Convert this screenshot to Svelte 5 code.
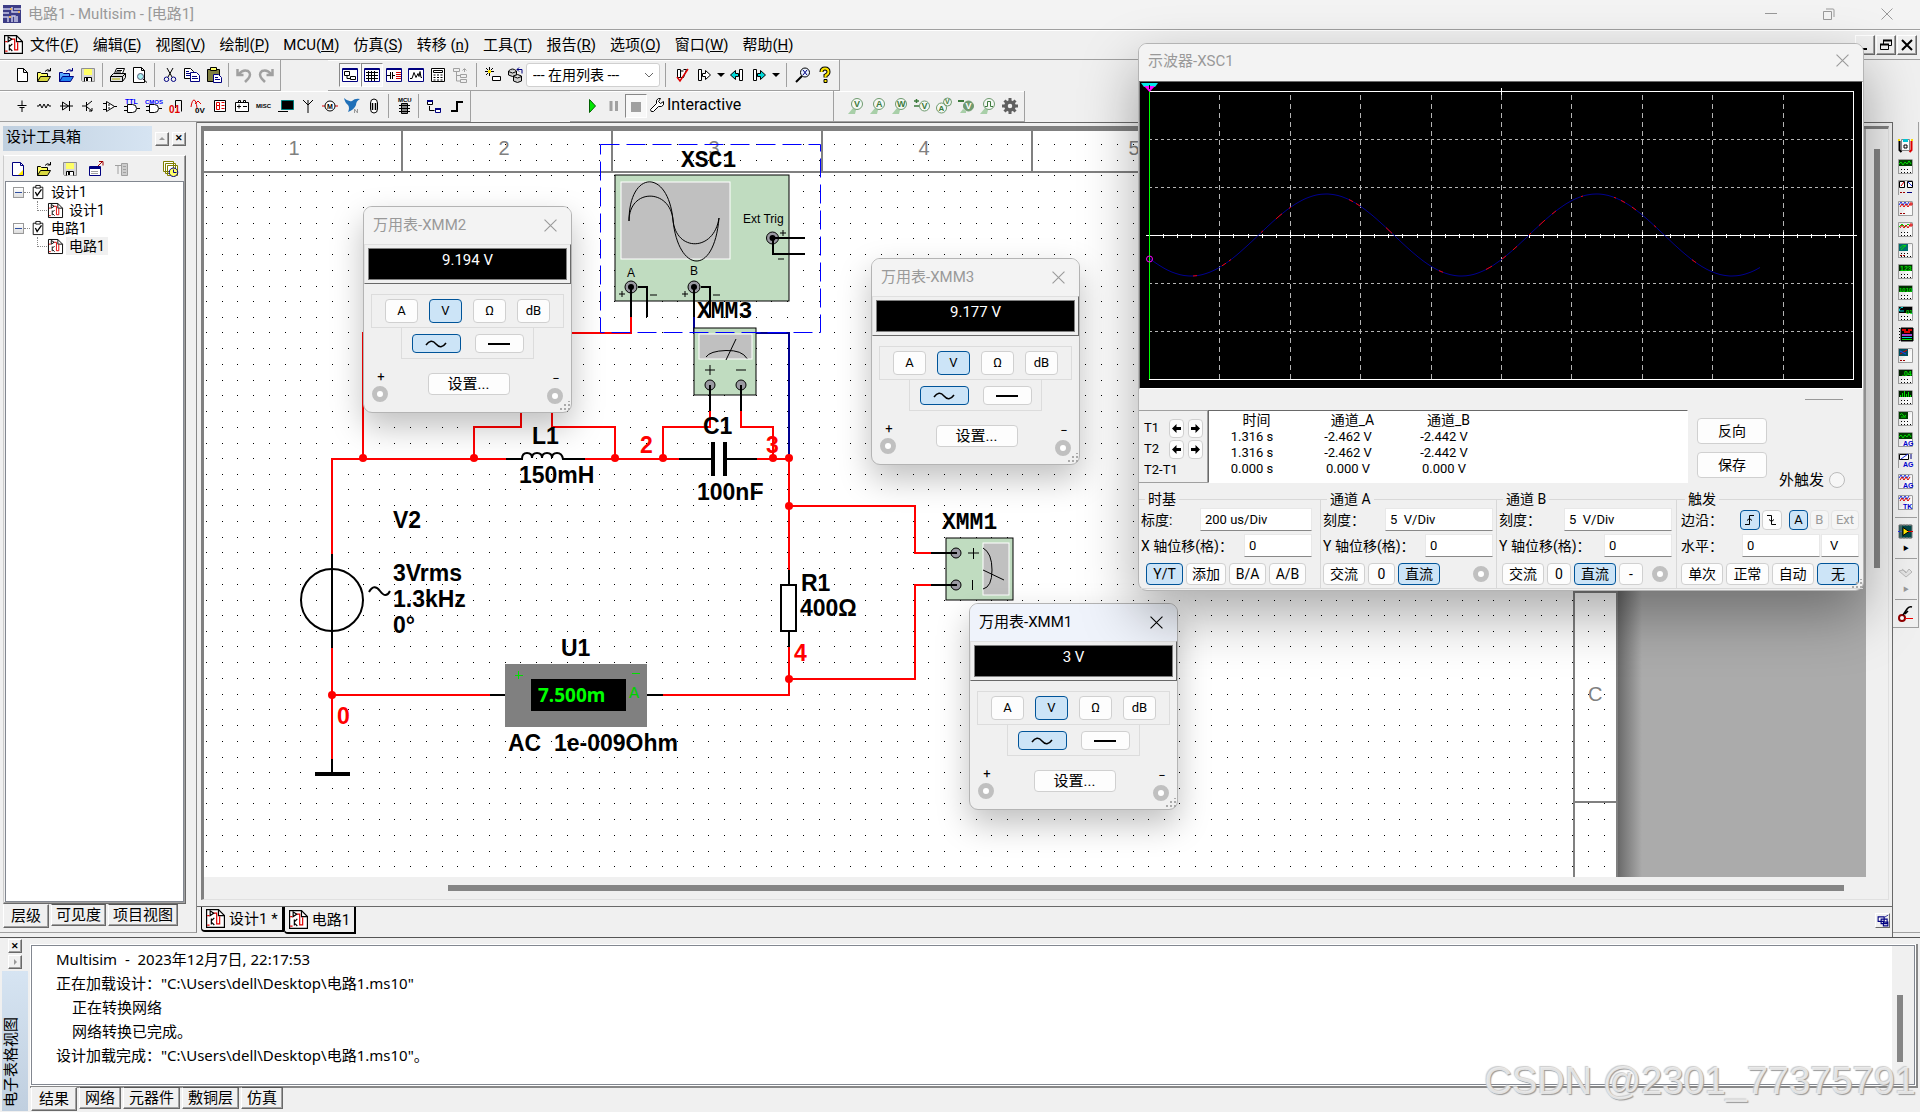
<script>
  // Multisim main window: toolbars, schematic sheet, instrument windows and log.

  const menus = [
    ['文件', 'F'], ['编辑', 'E'], ['视图', 'V'], ['绘制', 'P'], ['MCU', 'M'], ['仿真', 'S'], ['转移 ', 'n'],
    ['工具', 'T'], ['报告', 'R'], ['选项', 'O'], ['窗口', 'W'], ['帮助', 'H'],
  ]

  // ─── Icons ─────────────────────────────────────────────────────────
  // Each shape is [path, stroke, fill] or { t, x, y, s, c } for lettering.
  const K = '#000'
  const N = 'none'
  const NAVY = '#000080'
  const GREY = '#a0a0a0'
  const YEL = '#ffff66'
  const frame = ['M.5 1.5h15v13h-15z', NAVY, '#fff']
  const frameTop = ['M0 2.5h16', NAVY, N]
  const gate = ['M3.5 6.5h5q4 0 4 4t-4 4h-5zM0 8.5h3M0 12.5h3M13 10.5h3', K, '#fff']
  const probe = ['M9 .5a5.500 5.500 0 1 1 0 11a5.500 5.500 0 1 1 0-11z', '#6f9a6f', '#f4f8f4']
  const probeTail = ['M5 10l-5 6h7l1-4z', N, '#a8cfa8']

  const icons = {
    new: [['M3.5 1.5h6l4 4v9h-10zM9.5 1.5v4h4', K, '#fff']],
    newYellow: [['M2.5 1.5h8l3 3v10h-11zM10.5 1.5v3h3', NAVY, '#fff'], ['M13 9v5H8z', N, '#ffe800']],
    open: [['M1.5 14.5v-9h3l1 1h6v3', K, YEL], ['M1.5 14.5l3-5h10l-3 5z', K, '#d8d840'], ['M9 4.5q2-3 5-1M14.5 1v3h-3', K, N]],
    openDesign: [['M1.5 14.5v-9h3l1 1h6v3', NAVY, '#58a8ff'], ['M1.5 14.5l3-5h11l-3 5z', NAVY, '#2080f0'], ['M8 4.5q3-3 6-1M14.5 1v3h-3', NAVY, N]],
    save: [['M1.5 1.5h13v13h-12l-1-1z', '#909090', '#d8d8d8'], ['M4 2h8v6H4z', N, YEL], ['M4.5 14.5v-4h7v4', K, '#fff'], ['M6 11h2v3H6z', N, K]],
    print: [['M4.5 6.5l2-5h8l-2 5', K, '#fff'], ['M.5 9.5l3-3h12v4l-3 4H.5zM.5 9.5h12v5M12.5 9.5l3-3', K, '#ddd'], ['M2 12h8', '#b8b800', N], ['M7 3.5h5M6 5h5', K, N]],
    preview: [['M1.5.5h8l3 3v12h-11zM9.5.5v3h3', K, '#fff'], ['M8.5 6.5a3 3 0 1 1 0 6a3 3 0 1 1 0-6z', '#557', '#a8f0f0'], ['M11 12l4 3.500', K, N]],
    cut: [['M5 1l5 9M11 1L6 10', K, N], ['M4.500 10a2 2 0 1 1 0 4.500a2 2 0 1 1 0-4.500zM11.500 10a2 2 0 1 1 0 4.500a2 2 0 1 1 0-4.500z', NAVY, N]],
    copy: [['M.5 1.500h6l3 3v7h-9z', K, '#fff'], ['M6.500 5.500h6l3 3v6h-9z', NAVY, '#fff'], ['M2 4.500h3M2 6.500h4M2 8.500h4M8 9.500h5M8 11.500h6', NAVY, N]],
    paste: [['M1.500 2.500h12v12h-12z', K, '#808040'], ['M4.500.5h6v3h-6z', K, YEL], ['M7.500 7.500h5l3 3v5h-8z', NAVY, '#fff'], ['M9 10.500h3M9 12.500h5', NAVY, N]],
    undo: [['M1.500 2v6h6M3 7q4-5 9-3q4 3 0 8l-3 3', GREY, N, 2.500]],
    redo: [['M14.500 2v6h-6M13 7q-4-5-9-3q-4 3 0 8l3 3', GREY, N, 2.500]],
    hierarchy: [frame, frameTop, ['M2.500 4.500h5v4h-5zM8.500 9.500h5v3h-5zM5 9v2.500h3', K, '#fff']],
    grid: [frame, frameTop, ['M2 5.500h12M2 8.500h12M2 11.500h12M4.500 4v10M7.500 4v10M10.500 4v10', K, N]],
    database: [frame, frameTop, ['M1 8.500h3M4.500 5v7M6.500 5v7M7 8.500h2', K, N], ['M10 5.500h5M10 7.500h5M10 9.500h5M10 11.500h5', '#d00000', N]],
    grapher: [frame, frameTop, ['M2 11.500h2l2-6 2 5 2-4 1 3 1-5 1 6h1', K, N]],
    postproc: [['M1.500 1.500h13v13h-13z', K, '#fff'], ['M3.500 3.500h9v2h-9z', K, '#fff'], ['M3.500 8h2M7 8h2M10.500 8h2M3.500 10.500h2M7 10.500h2M10.500 10.500h2M3.500 13h2M7 13h2M10.500 13h2', K, N]],
    tree: [['M1.500 1.500h6v3h-6zM8.500 7.500h6v3h-6zM8.500 12.500h6v3h-6zM4.500 5v9h4M5 8.500h3M12.500 5V2M10.500 3.500l2-2 2 2', GREY, N]],
    wizard: [['M7.500 9.500h8v4h-8z', K, '#fff'], ['M4.500 0v3M4.500 6v3M0 4.500h3M6 4.500h3M1 1l2 2M8 1L6 3M1 8l2-2', K, N], ['M3 3h3v3H3z', N, '#ffe800']],
    dbmanager: [['M1.500 4q4-4 8 0v4q-4 3-8 0zM1.500 4.500q4 3 8 0', K, '#ccc'], ['M6.500 9q4-3 8 0v5q-4 3-8 0zM6.500 9.500q4 3 8 0', K, '#ccc'], ['M10 2.500h5v4M12 .5l-2 2 2 2', NAVY, N]],
    erc: [['M3.500 2.500h3v8h-3zM9.500 2.500h3l-3 8h-3M6.500 4h3', K, '#fff'], ['M3 10l3 4L14 2', '#e00000', N, 1.5]],
    fwd: [['M2.500 2.500h3v11h-3zM6.500 6.500h3v-3l5 4.500-5 4.500v-3h-3z', K, '#fff']],
    back: [['M13.500 2.500h-3v11h3z', K, '#fff'], ['M9.500 6.500h-3v-3L1.500 8l5 4.500v-3h3z', K, '#00d8d8']],
    fwdCyan: [['M2.500 2.500h3v11h-3z', K, '#fff'], ['M6.500 6.500h3v-3l5 4.500-5 4.500v-3h-3z', K, '#00d8d8']],
    find: [['M10 1a4.500 4.500 0 1 1 0 9a4.500 4.500 0 1 1 0-9z', K, '#e8f0ff'], ['M8 3l4 5M12 3L8 8', NAVY, N], ['M7 9l-6 6', K, N, 2]],
    help: [['M4.500 5q0-3.500 3.500-3.500T11.500 5q0 2-3 3.500v2', K, N, 4], ['M4.500 5q0-3.500 3.500-3.500T11.500 5q0 2-3 3.500v2', '#ffe800', N, 2], ['M7 12.500h3v3H7z', K, '#ffe800']],
    source: [['M8 2.500v5M3.500 7.500h9M5.500 9.500h5M8 10v4', K, N]],
    resistor: [['M1 8h2l1-2 2 4 2-4 2 4 2-4 1 2h2', K, N]],
    diode: [['M2 8h13M4.500 4v8l6-4zM11.500 3v10', K, N]],
    transistor: [['M2 8h4M6.500 4v9M7 7l5-4M7 9l5 4M9 13h3v-3', K, N]],
    opamp: [['M4.500 3.500v10l8-5zM1 5.500h3M1 11.500h3M12 8.500h3', K, '#fff'], ['M6 7h2M6 10h2', K, N]],
    ttl: [gate, { t: 'TTL', x: 1, y: 6, s: 7, c: '#0000ff' }],
    cmos: [gate, { t: 'CMOS', x: -1, y: 6, s: 6, c: '#0000ff' }],
    digital: [['M7.500 10V2.500h6v11', K, N], { t: '01', x: 1, y: 15, s: 10, c: '#e00000' }],
    mixed: [['M1 9q1-7 3-7t3 8', '#e00000', N], ['M5 6l3-3 3 3', '#e00000', N], { t: '0V', x: 5, y: 15, s: 8, c: K }],
    indicator: [['M2.500 2.500h11v11h-11z', K, '#fff'], ['M4.500 4.500h3v3h-3zM4.500 7.500h3v4h-3zM9.500 4.500h3M9.500 7.500h3M9.500 10.500h3', '#e00000', N]],
    power: [['M1.500 4.500h13v9h-13zM4.500 4.500v-2h2v2M9.500 4.500v-2h2v2M3 8.500h4M5 6.500v4M9 8.500h4', K, '#fff']],
    misc: [{ t: 'MISC', x: 0, y: 10, s: 6, c: K }],
    periph: [['M3.500 2.500h12v9h-12z', '#008080', K], ['M0 13.500h10', K, N]],
    rf: [['M8 15V7L3 2M8 7l5-5M8 2v5', K, N]],
    motor: [['M0 8h3M13 8h3', '#e00000', N], ['M8 3a5 5 0 1 1 0 10a5 5 0 1 1 0-10z', K, '#fff'], { t: 'M', x: 5, y: 11, s: 7, c: K }],
    ni: [['M0 0q4 4 8 3q3-3 8-2q-4 2-4 6q-2 5-8 7q2-4 0-7q-3-2-4-7z', N, '#2070b8'], ['M10.500 15v-4l3 4v-4', '#999', N]],
    connector: [['M8 1q3.500 0 3.500 4v6q0 4-3.500 4t-3.500-4V5q0-4 3.500-4z', K, '#fff'], ['M6.500 5v7M9.500 5v7', K, N, 1.500]],
    mcu: [['M5.500 5.500h6v10h-6z', K, '#888'], ['M3 7.500h11M3 10.500h11M3 13.500h11', K, N], { t: 'MCU', x: 2, y: 4, s: 6, c: K }],
    block: [['M1.500 2.500h5v4h-5z', K, '#fff'], ['M9.500 10.500h5v4h-5z', NAVY, '#fff'], ['M1 3h6M9 11h6', NAVY, N, 2], ['M3.500 8v4.500h5', K, N]],
    bus: [['M3 13h6V4h6', K, N, 2]],
    probeV: [probeTail, probe, { t: 'V', x: 6, y: 9, s: 9, c: '#3c7a3c' }],
    probeA: [probeTail, probe, { t: 'A', x: 6, y: 9, s: 9, c: '#3c7a3c' }],
    probeW: [probeTail, probe, { t: 'W', x: 5, y: 9, s: 9, c: '#3c7a3c' }],
    probeDiff: [['M0 3h5M2.500 1v4M0 8h5', '#3c7a3c', N, 1.5], ['M10.500 3a5 5 0 1 1 0 10a5 5 0 1 1 0-10z', '#6f9a6f', '#f4f8f4'], { t: 'V', x: 7.500, y: 11, s: 9, c: '#3c7a3c' }],
    probeAV: [['M11.500 0a4 4 0 1 1 0 8a4 4 0 1 1 0-8zM5.500 5a5 5 0 1 1 0 10a5 5 0 1 1 0-10z', '#6f9a6f', '#f4f8f4'], { t: 'V', x: 9, y: 6, s: 7, c: '#3c7a3c' }, { t: 'A', x: 2.500, y: 13, s: 8, c: '#3c7a3c' }],
    probeRef: [['M0 3h6', '#3c7a3c', N, 2], ['M10.500 3a5 5 0 1 1 0 10a5 5 0 1 1 0-10z', '#6f9a6f', '#6f9a6f'], ['M2 15l3-4 3 2v2z', N, '#a8cfa8'], { t: 'V', x: 7.500, y: 11, s: 9, c: '#fff' }],
    probeDig: [probeTail, probe, ['M5 8.500h2.500v-5h3v5H13', '#3c7a3c', N]],
    gear: [['M8 4a4 4 0 1 1 0 8a4 4 0 1 1 0-8z', '#606060', N, 3.500], ['M8 0v3M8 13v3M0 8h3M13 8h3M2.500 2.500l2 2M11.500 11.500l2 2M13.500 2.500l-2 2M4.500 11.500l-2 2', '#606060', N, 3]],
    rename: [['M1.500 5.500h11v9h-11z', NAVY, '#fff'], ['M1 7h12', NAVY, N, 2], ['M3 10.500h7M3 12.500h7', GREY, N], ['M10 5l5-5M11 .5h4v4', '#a00000', N]],
    text: [['M1 4.500h6M4 5v8', GREY, N], ['M7.500 2.500h6v12h-6zM9 8.500h3M9 11.500h3M9 5.500h3', GREY, '#ccc']],
    history: [['M.5.500h10v10H.5zM2.500 2.500h10v10h-10zM4.500 4.500h10v10h-10z', '#808000', '#fff'], ['M10.500 7a4 4 0 1 1 0 8.500a4 4 0 1 1 0-8.500z', NAVY, YEL], ['M10.500 8.500v3h3', NAVY, N]],
    clip: [['M2.500 2.500h11v13h-11z', K, '#fff'], ['M5.500.500h5v3h-5z', K, '#fff'], ['M5 8l2 4 5-7', K, N, 1.5]],
    sheet: [['M.5.500h10l5 5v10H.5z', K, '#fff'], ['M10.500.500v5h5', K, N], ['M1 13.500h2M1 5.500h2M6 3.500h3v9h2.500V6', '#e00000', N], ['M3.500 1.500v4l3-2zM4.500 8v5M5 9.500l2-2M5 11.500l2 2', K, N]],
    windows: [['M1.500 2.500h8v6h-8zM5.500 5.500h8v6h-8zM8.500 9.500h6v5h-6z', NAVY, '#fff', 1.500], ['M10 3l5-3', NAVY, N]],
    play: [['M5.500 1.500v13l6-6.500z', '#006000', '#00e800']],
    pause: [['M5 3v10M10.500 3v10', GREY, N, 3]],
    stop: [['M3 4h10v10H3z', N, GREY]],
  }

  const toolRows = [
    [
      ['new', 'open', 'openDesign', 'save', '|', 'print', 'preview', '|', 'cut', 'copy', 'paste', '|', 'undo', 'redo'],
      ['*hierarchy', '*grid', 'database', 'grapher', 'postproc', 'tree', '|', 'wizard', 'dbmanager', 'select', '|',
        'erc', 'fwd', 'v', 'back', 'fwdCyan', 'v', '|', 'find', 'help'],
    ],
    [
      ['source', 'resistor', 'diode', 'transistor', 'opamp', 'ttl', 'cmos', 'digital', 'mixed', 'indicator', 'power', 'misc',
        'periph', 'rf', 'motor', 'ni', 'connector', '|', 'mcu', '|', 'block', 'bus'],
      ['play', 'pause', '*stop', 'sim'],
      ['probeV', 'probeA', 'probeW', 'probeDiff', 'probeAV', 'probeRef', 'probeDig', 'gear'],
    ],
  ]

  // ─── Instruments on the right-hand bar ─────────────────────────────
  const screen = (fill) => ['M1 1h13v6H1z', N, fill]
  const box = ['M.5 15V.500h14', '#a0a0a0', N]
  const box2 = ['M14.500 1v13.500H1', '#a0a0a0', '#fbfbfb']
  const dots = ['M3 10.500h1M6 10.500h1M9 10.500h1M3 13.500h1M6 13.500h1M9 13.500h1M12 13.500h1', K, N]
  const redDots = ['M2 12.500h2M5 12.500h2', '#a00000', N]
  const waves = ['M2 6l2-3 2 3 2-3 2 3 2-3', '#e00000', N]
  const bluWaves = ['M1 4l2-3 2 3 2-3 2 3 2-3', '#2030e0', N]
  const green = '#00e000'
  const instruments = [
    [['M3.500 1.500h8v11h-8z', '#888', '#fff'], ['M5 1h5v3H5z', N, '#00c8d8'], ['M6 7h3v3H6z', K, N], ['M1.500 3v9l2 2', K, N, 2], ['M13.500 3v9l-2 2', '#e00000', N, 2], ['M1 1v2M14 1v2', '#ffe000', N, 2]],
    [box2, box, screen('#004000'), ['M1 5l2-2 2 3 2-3 2 2 2-3 2 3', green, N], dots],
    [box, ['M1.500 1.500h5v6h-5zM9.500 1.500h5v6h-5z', K, '#fff'], ['M3 6l3-4', '#e00000', N], ['M10 2l4 4', '#2030e0', N], redDots, ['M9 12.500h5', NAVY, N]],
    [box2, box, bluWaves, waves, redDots, ['M13 1v4M11 3h4', '#e00000', N]],
    [box2, box, ['M1 5l3-3 3 3 3-3 2 2', green, N], waves, dots, ['M13 1v4M11 3h4', '#e00000', N]],
    [box2, box, ['M1 1h9v7H1z', N, '#007070'], ['M2 5q3-4 6-2M3 7l5-5', green, N], redDots, dots],
    [box2, box, screen('#003000'), { t: '123', x: 2, y: 7, s: 7, c: green }, dots],
    [box2, box, screen('#003000'), { t: '1010', x: 1, y: 7, s: 6, c: green }, dots],
    [box2, box, screen(K), ['M5 1.500H3L1.500 3v2H6', '#00d8d8', N], { t: '01', x: 8, y: 8, s: 6, c: green }, dots],
    [['M3 1h12v13H3z', K, K], ['M4 3h3v2h4V3h3', '#e00000', N, 2], ['M4 8h10', '#a040d0', N, 2], ['M4 10.500h10', '#00d8d8', N], ['M4 12.500h10', green, N], ['M1.500 1v1M1.500 4v1M1.500 7v1M1.500 10v1M1.500 13v1', K, N]],
    [box2, box, ['M1 1h9v7H1z', N, '#005060'], ['M2 6l7-4', '#e00000', N], ['M2 3l6 3', '#2040ff', N], redDots],
    [box2, box, screen('#002000'), { t: '.04', x: 4, y: 7, s: 7, c: green }, dots],
    [box2, box, screen('#002000'), ['M2.500 7V5M4.500 7V3M6.500 7V1M8.500 7V4M10.500 7V2M12.500 7V5', green, N], dots],
    [box2, box, ['M1 1h9v7H1z', N, '#004000'], ['M2 4q2-3 3 0t3 0M3 6h5', green, N], dots],
    [box2, box, screen('#004000'), ['M1 5l2-2 2 3 2-3 2 2 2-3 2 3', green, N], { t: 'AG', x: 5, y: 14, s: 7, c: '#0000d0' }],
    [box, ['M1.500 1.500h9v5h-9z', K, '#fff'], ['M3 6l7-5', '#2030e0', N], ['M13 1v5', NAVY, N], { t: 'AG', x: 5, y: 14, s: 7, c: '#0000d0' }],
    [box2, box, bluWaves, waves, { t: 'AG', x: 5, y: 14, s: 7, c: '#0000d0' }],
    [box2, box, bluWaves, waves, { t: 'TK', x: 5, y: 14, s: 7, c: '#0000d0' }],
  ]
  const chip = [['M1 1h13v13H1z', '#777', '#004848'], ['M5 3.500v8l6-4z', K, '#ffe800'], ['M0 7.500h4', '#2030e0', N], ['M10 7.500h5', '#e00000', N], ['M3 0v15M6 0v2M9 0v2M12 0v2M6 13v2M9 13v2M12 13v2', '#888', N]]
  const ghost = [['M1 6l7 6 6-5-3-3-3 4-3-3zM4 4l4 3', '#b8b8b8', '#e4e4e4']]
  const clamp = [['M4 9a3 3 0 1 1 0 6a3 3 0 1 1 0-6z', '#900000', '#fff', 2], ['M7 12.500h8', '#f00000', N], ['M5 9l4-6q2-3 5-2M7 8l3-3', K, N, 1.5]]

  // ─── Schematic ─────────────────────────────────────────────────────
  // Grid points fall 15.7px apart; one tile holds ten of them.
  const steps = [0, 16, 31, 47, 63, 79, 94, 110, 126, 142]
  const dotPath = steps.flatMap((y) => steps.map((x) => `M${x} ${y}h1v1h-1z`)).join('')

  const columns = [[294, '1'], [504, '2'], [714, '3'], [924, '4'], [1134, '5'], [1344, '6']]
  const joints = [
    [363, 458], [474, 458], [615, 458], [663, 458], [773, 458], [789, 458],
    [789, 506], [789, 679], [332, 695],
  ]
  const labels = [
    ['L1', 532, 444], ['150mH', 519, 483], ['C1', 703, 434], ['100nF', 697, 500],
    ['V2', 393, 528], ['3Vrms', 393, 581], ['1.3kHz', 393, 607], ['0°', 393, 633],
    ['R1', 801, 591], ['400Ω', 800, 616], ['U1', 561, 656], ['AC  1e-009Ohm', 508, 751],
  ]
  const nets = [['2', 640, 453], ['3', 766, 453], ['4', 794, 661], ['0', 337, 724]]

  // ─── Instrument windows ────────────────────────────────────────────
  const meters = [
    { name: 'XMM2', value: '9.194 V', x: 363, y: 206 },
    { name: 'XMM3', value: '9.177 V', x: 871, y: 258 },
    { name: 'XMM1', value: '3 V', x: 969, y: 603, active: true },
  ]

  const scope = { x: 1138, y: 43 }
  const wave = (x) => 152 + 41 * Math.cos((2 * Math.PI * (x - 50)) / 270.4)
  const trace = (from, to) => {
    let d = ''
    for (let x = from; x <= to; x += 2) d += `${d ? 'L' : 'M'}${x} ${wave(x).toFixed(1)}`
    return d
  }
  const redParts = [
    [52, 56], [81, 85], [88, 91], [120, 122], [135, 141], [148, 151], [208, 212], [215, 219], [245, 251],
    [298, 303], [345, 352], [361, 365], [372, 377], [388, 390], [398, 405], [411, 415], [440, 443], [473, 476],
    [480, 485], [491, 495], [513, 516], [551, 556],
  ].map(([a, b]) => trace(a, b)).join('')
  const divs = [1, 2, 3, 4, 5, 6, 7, 8, 9].map((i) => Math.round(8 + i * 70.4))
  const ticks = Array.from({ length: 50 }, (_, i) => Math.round(8 + i * 14.08))

  const readings = [
    ['1.316 s', '-2.462 V', '-2.442 V'],
    ['1.316 s', '-2.462 V', '-2.442 V'],
    ['0.000 s', '0.000 V', '0.000 V'],
  ]
  const groups = [
    { title: '时基', cls: 'time', scale: '标度:', value: '200 us/Div', shift: 'X 轴位移(格)：', buttons: ['*Y/T', '添加', 'B/A', 'A/B'] },
    { title: '通道 A', cls: 'cha', scale: '刻度：', value: '5  V/Div', shift: 'Y 轴位移(格)：', buttons: ['交流', '0', '*直流'], ring: true },
    { title: '通道 B', cls: 'chb', scale: '刻度：', value: '5  V/Div', shift: 'Y 轴位移(格)：', buttons: ['交流', '0', '*直流', '-'], ring: true },
  ]

  const log = [
    [0, 'Multisim  -  2023年12月7日, 22:17:53'],
    [0, '正在加载设计："C:\\Users\\dell\\Desktop\\电路1.ms10"'],
    [1, '正在转换网络'],
    [1, '网络转换已完成。'],
    [0, '设计加载完成："C:\\Users\\dell\\Desktop\\电路1.ms10"。'],
  ]
  const tree = ['设计1', '电路1']
</script>

{#snippet glyph(shapes)}
  <svg class="icon" viewBox="0 0 16 16" width="16" height="16" aria-hidden="true">
    {#each shapes as s}
      {#if s.t}
        <text x={s.x} y={s.y} font-size={s.s} fill={s.c}>{s.t}</text>
      {:else}
        <path d={s[0]} stroke={s[1]} fill={s[2]} stroke-width={s[3] ?? 1} />
      {/if}
    {/each}
  </svg>
{/snippet}

{#snippet cross(size)}
  <svg width={size} height={size} viewBox="0 0 12 12" aria-hidden="true"><path d="M.5.5l11 11M11.5.5l-11 11" stroke="currentColor" fill="none" /></svg>
{/snippet}

{#snippet coax(x, y)}
  <circle cx={x} cy={y} r="6" fill="#9a9aa2" stroke="#000" />
  <circle cx={x} cy={y} r="3" fill="#000" />
{/snippet}

{#snippet cursorButtons(name)}
  <button aria-label="{name} 左移"><svg width="9" height="9"><path d="M0 4.500L4.500 0v3H9v3H4.500v3z" /></svg></button>
  <button aria-label="{name} 右移"><svg width="9" height="9"><path d="M9 4.500L4.500 0v3H0v3h4.500v3z" /></svg></button>
{/snippet}

<div class="app">
  <header class="titlebar">
    <svg class="logo" viewBox="0 0 18 18" width="18" height="18" aria-hidden="true">
      <rect width="18" height="18" fill="#3c3c86" />
      <path d="M0 4h8M0 8h6M0 12h5v5M9 2v5h8M9 17v-6h3v6M14 11v6M11 4h7" stroke="#c8c8e8" fill="none" stroke-width="1.5" />
      <path d="M7 4h2M6 12h2M15 7h2" stroke="#e8b060" stroke-width="2" />
    </svg>
    <h1>电路1 - Multisim - [电路1]</h1>
    <div class="win-buttons">
      <button aria-label="最小化"><svg width="12" height="12"><path d="M0 5.500h12" stroke="#999" /></svg></button>
      <button aria-label="还原"><svg width="12" height="12"><path d="M.5 3.500h8v8h-8zM3 1h7q1 0 1 1v7" stroke="#999" fill="none" /></svg></button>
      <button aria-label="关闭">{@render cross(12)}</button>
    </div>
  </header>

  <nav class="menubar">
    {@render glyph(icons.sheet)}
    {#each menus as [label, key]}
      <button>{label}(<u>{key}</u>)</button>
    {/each}
    <div class="mdi">
      <button aria-label="最小化文档"><svg width="12" height="12"><path d="M2 10h6" stroke="#000" stroke-width="2" /></svg></button>
      <button aria-label="还原文档"><svg width="12" height="12"><path d="M3.500 5V1.500h8v5H9M.5 5.500h8v5h-8z" stroke="#000" fill="none" /><path d="M3 1.500h9M0 5.500h9" stroke="#000" stroke-width="2" /></svg></button>
      <button aria-label="关闭文档"><svg width="12" height="12"><path d="M1 1l10 10M11 1L1 11" stroke="#000" stroke-width="2" /></svg></button>
    </div>
  </nav>

  {#each toolRows as row, r}
    <div class="toolrow row{r}">
      {#each row as bar}
        <div class="toolbar">
          {#each bar as item}
            {#if item === '|'}
              <i class="sep"></i>
            {:else if item === 'v'}
              <button class="drop" aria-label="更多"></button>
            {:else if item === 'select'}
              <select aria-label="在用列表"><option>--- 在用列表 ---</option></select>
            {:else if item === 'sim'}
              <button class="sim">
                <svg width="16" height="16" viewBox="0 0 16 16"><path d="M1.500 12.500l6-6q-1-4 2-5h2l-2 3 2 2 3-2q1 4-2 5h-3l-5 5q-3 1-3-2z" fill="#fff" stroke="#000" /></svg>
                Interactive
              </button>
            {:else}
              <button class="tool" class:pressed={item[0] === '*'} aria-label={item.replace('*', '')}>
                {@render glyph(icons[item.replace('*', '')])}
              </button>
            {/if}
          {/each}
        </div>
      {/each}
    </div>
  {/each}

  <main>
    <aside class="dock">
      <div class="dock-head">
        <h2>设计工具箱</h2>
        <button class="mini up" aria-label="折叠"></button>
        <button class="mini" aria-label="关闭工具箱">✕</button>
      </div>
      <div class="dock-panel">
        <div class="dock-tools">
          {#each ['newYellow', 'open', 'save', 'rename', 'text', 'history'] as name}
            <button class="tool {name}" aria-label={name}>{@render glyph(icons[name])}</button>
          {/each}
        </div>
        <ul class="tree">
          {#each tree as name, i}
            <li>
              <div class="node"><button class="fold" aria-label="折叠 {name}"></button><i></i>{@render glyph(icons.clip)}<span>{name}</span></div>
              <div class="node child"><i></i>{@render glyph(icons.sheet)}<span class:selected={i === 1}>{name}</span></div>
            </li>
          {/each}
        </ul>
      </div>
      <div class="tabs dock-tabs">
        <button class="on">层级</button><button>可见度</button><button>项目视图</button>
      </div>
    </aside>

    <section class="work">
      <div class="frame">
        <div class="canvas">
          <svg width="100%" height="100%">
            <defs>
              <pattern id="dots" x="206" y="144" width="157" height="157" patternUnits="userSpaceOnUse">
                <path d={dotPath} fill="#000" />
              </pattern>
              <linearGradient id="edge"><stop offset="0" stop-color="#6a6a6a" /><stop offset="1" stop-color="#ababab" /></linearGradient>
            </defs>
            <g transform="translate(-204 -129)">
              <rect x="204" y="129" width="1412" height="900" fill="#fff" />
              <rect x="204" y="131" width="1410" height="740" fill="url(#dots)" shape-rendering="crispEdges" />
              <rect x="1618" y="129" width="24" height="900" fill="url(#edge)" />
              <path d="M204 130h1414M204 172h1370M1574 172v800M1617 129v900M402 130v42M612 130v42M822 130v42M1032 130v42M1574 592h43M1574 802h43" stroke="#808080" stroke-width="2" fill="none" />
              <g class="ruler">
                {#each columns as [x, n]}<text {x} y="155" text-anchor="middle">{n}</text>{/each}
                <text x="1588" y="701">C</text>
              </g>

              <!-- wires -->
              <path d="M363 458V333H631V317M332 554V459H506M585 459H679M474 459V427H521V405M552 405V427H615V459M663 459V427H710V411M741 411V427H773V459M757 459H789V570M789 506H915V553H931M789 679H915V585H931M789 647V695H663M490 695H332M332 648V759" class="wire" />
              <path d="M694 317V333H789V455" class="wire navy" />

              <!-- passive parts and source -->
              <path d="M506 459H522q0-6 5-6t5 5q0-5 5-5t5 5q0-5 5-5t5 5q0-5 5-5t6 6H585M679 459H711M726 459H757M332 554V648M332 759V774M789 570V585M789 631V647M490 695H505M647 695H663" class="lead" />
              <path d="M713 442V476M725 442V476M315 774H350" stroke="#000" stroke-width="4" />
              <circle cx="332" cy="600" r="31" class="lead" />
              <path d="M369 592q5-9 11-1t10 0" class="lead" />
              <rect x="781" y="585" width="15" height="46" fill="#fff" stroke="#000" stroke-width="2" />

              <!-- ammeter -->
              <rect x="505" y="664" width="142" height="63" fill="#808080" />
              <rect x="531" y="679" width="95" height="32" fill="#000" />
              <path d="M515 675.500h8M518.500 671v8M632 673.500h8" stroke="#00e000" />
              <text x="538" y="702" class="reading">7.500m</text>
              <text x="629" y="698" class="amp">A</text>

              <!-- oscilloscope symbol -->
              <rect x="615" y="175" width="174" height="126" class="part" />
              <rect x="621" y="182" width="109" height="77" fill="#c0c0c0" stroke="#fff" />
              <path d="M629 221C629 170 668 168 673 220S714 278 719 218M629 221C629 188 670 188 673 220S714 252 719 218" fill="none" stroke="#000" />
              {@render coax(772.5, 238)}
              {@render coax(631, 287)}
              {@render coax(694, 287)}
              <path d="M772 238H805M773 238V254H805M631 287V317M638 287H647V317M694 287V317M701 287H710V317" class="lead" />
              <path d="M780 233h6M783 230v6M778 259h6M619 294h6M622 291v6M650 295h7M682 294h6M685 291v6M713 295h7" stroke="#000" />
              <g class="pins"><text x="743" y="223">Ext Trig</text><text x="627" y="277">A</text><text x="690" y="275">B</text></g>

              <!-- multimeter symbols -->
              <rect x="694" y="328" width="62" height="67" class="part" />
              <rect x="699" y="334" width="53" height="25" fill="#c0c0c0" stroke="#fff" />
              <path d="M706 357q4-6 20-6.500t21 8M736 339l-10 21M705 370h10M710 365v10M736 370h10" fill="none" stroke="#000" />
              <circle cx="710" cy="385" r="5" class="pin" /><circle cx="741" cy="385" r="5" class="pin" />
              <path d="M710 385V411M741 385V411" class="lead" />
              <rect x="946" y="538" width="67" height="62" class="part" />
              <rect x="983" y="543" width="26" height="52" fill="#c0c0c0" stroke="#fff" />
              <path d="M983 548q9 5 9 22t-9 19M983 570l21 10M968 553h11M973.500 548v11M972.500 580v10" fill="none" stroke="#000" />
              <circle cx="956" cy="553" r="5" class="pin" /><circle cx="956" cy="585" r="5" class="pin" />
              <path d="M931 553H957M931 585H957" class="lead" />
              <rect x="600.500" y="144.500" width="220" height="188" fill="none" stroke="#0000ff" stroke-dasharray="19 7" />

              {#each joints as [x, y]}<circle cx={x} cy={y} r="4" fill="#f00" />{/each}
              <g class="names"><text x="681" y="167">XSC1</text><text x="697" y="318">XMM3</text><text x="942" y="529">XMM1</text></g>
              <g class="values">
                {#each labels as [t, x, y]}<text {x} {y}>{t}</text>{/each}
              </g>
              <g class="values net">{#each nets as [t, x, y]}<text {x} {y}>{t}</text>{/each}</g>
            </g>
          </svg>
        </div>
        <div class="vscroll"><i></i></div>
        <div class="hscroll"><i></i></div>
        <div></div>
      </div>
      <div class="doc-tabs">
        <button>{@render glyph(icons.sheet)}设计1 *</button>
        <button class="on">{@render glyph(icons.sheet)}电路1</button>
        <button class="raise" aria-label="窗口列表">{@render glyph(icons.windows)}</button>
      </div>
    </section>

    <aside class="instruments">
      <div class="inst-bar">
        {#each instruments as shapes, i}
          <button aria-label="仪器 {i + 1}">{@render glyph(shapes)}</button>
        {/each}
        <hr />
        <button aria-label="LabVIEW 仪器">{@render glyph(chip)}</button>
        <button class="more" aria-label="展开">▶</button>
        <hr />
        <button aria-label="NI ELVISmx 仪器">{@render glyph(ghost)}</button>
        <button class="more off" aria-label="展开">▶</button>
        <hr />
        <button aria-label="电流探针">{@render glyph(clamp)}</button>
      </div>
    </aside>
  </main>

  <section class="sheetview">
    <div class="side">
      <button class="mini" aria-label="关闭电子表格视图">✕</button>
      <button class="mini right" aria-label="折叠电子表格视图"></button>
      <h2>电子表格视图</h2>
    </div>
    <div class="results">
      <div class="log">
        <div class="lines">
          {#each log as [indent, text]}
            <p class:indent={indent}>{text}</p>
          {/each}
        </div>
        <div class="log-scroll"><i></i></div>
      </div>
      <div class="tabs">
        <button class="on">结果</button><button>网络</button><button>元器件</button><button>敷铜层</button><button>仿真</button>
      </div>
    </div>
  </section>

  {#each meters as m}
    <div class="window meter" class:active={m.active} style="left: {m.x}px; top: {m.y}px">
      <div class="window-title"><span>万用表-{m.name}</span><button aria-label="关闭 {m.name}">{@render cross(13)}</button></div>
      <div class="display"><output>{m.value}</output></div>
      <div class="modes">
        <button>A</button><button class="on">V</button><button>Ω</button><button>dB</button>
      </div>
      <div class="coupling">
        <button class="on" aria-label="交流"><svg width="22" height="10"><path d="M1 6Q6-1 11 5T21 4" fill="none" stroke="#000" stroke-width="1.500" /></svg></button>
        <button aria-label="直流"><svg width="22" height="10"><path d="M0 5h22" stroke="#000" stroke-width="2" /></svg></button>
      </div>
      <div class="meter-foot">
        <div class="term"><span>+</span><i class="ring"></i></div>
        <button>设置...</button>
        <div class="term minus"><span>−</span><i class="ring"></i></div>
      </div>
      <svg class="grip" width="10" height="10"><path d="M8 0h2M4 4h2M8 4h2M0 8h2M4 8h2M8 8h2" stroke="#aaa" stroke-width="2" /></svg>
    </div>
  {/each}

  <div class="window scope" style="left: {scope.x}px; top: {scope.y}px">
    <div class="window-title"><span>示波器-XSC1</span><button aria-label="关闭 XSC1">{@render cross(13)}</button></div>
    <div class="crt">
      <svg viewBox="0 0 720 304" width="100%">
        <g shape-rendering="crispEdges" fill="none">
          <path d={divs.map((x) => `M${x}.5 12V296`).join('')} stroke="#b4b4b4" stroke-dasharray="5 4" />
          <path d="M8 56.500H712M8 104.500H712M8 200.500H712M8 248.500H712" stroke="#b4b4b4" stroke-dasharray="3 3" />
          <path d="M8 8.500H712.500V296.500H8M360.500 5V12M5 152.500H716" stroke="#fff" />
          <path d={ticks.map((x, i) => `M${x}.5 ${i % 5 ? 151 : 149}V155`).join('')} stroke="#fff" />
          <path d="M8.500 8V296" stroke="#00ff00" />
        </g>
        <path d={trace(9, 619)} stroke="#000090" fill="none" />
        <path d={redParts} stroke="#f00000" fill="none" />
        <path d="M0 0h17l-3 4H3z" fill="#00e8e8" /><path d="M3 3h11L8.500 9z" fill="#f0f" /><path d="M8.500 2v4" stroke="#000" />
        <circle cx="8.500" cy="176" r="3" stroke="#f0f" fill="none" />
      </svg>
    </div>
    <div class="rule"></div>
    <div class="readout">
      <div class="cursors">
        <span>T1</span>{@render cursorButtons('T1')}
        <span>T2</span>{@render cursorButtons('T2')}
        <span class="delta">T2-T1</span>
      </div>
      <div class="values-box">
        <table>
          <thead><tr><th>时间</th><th>通道_A</th><th>通道_B</th></tr></thead>
          <tbody>
            {#each readings as r}
              <tr>{#each r as v}<td>{v}</td>{/each}</tr>
            {/each}
          </tbody>
        </table>
      </div>
      <div class="actions">
        <div class="pair"><button>反向</button><button>保存</button></div>
        <label class="ext">外触发<input type="radio" /></label>
      </div>
    </div>
    <div class="groups">
      {#each groups as g}
        <fieldset class={g.cls}>
          <legend>{g.title}</legend>
          <label>{g.scale}<input class="long" type="text" value={g.value} /></label>
          <label>{g.shift}<input type="text" value="0" /></label>
          <div class="btns">
            {#each g.buttons as b}<button class:on={b[0] === '*'}>{b.replace('*', '')}</button>{/each}
            {#if g.ring}<i class="ring"></i>{/if}
          </div>
        </fieldset>
      {/each}
      <fieldset class="trig">
        <legend>触发</legend>
        <div class="line">
          <span>边沿：</span>
          <button class="on" aria-label="上升沿"><svg width="10" height="12"><path d="M0 10.500h4.500v-9H9M2 6.500l2.500-2 2.500 2" fill="none" stroke="#000" /></svg></button>
          <button aria-label="下降沿"><svg width="10" height="12"><path d="M0 1.500h4.500v9H9M2 5.500l2.500 2 2.500-2" fill="none" stroke="#000" /></svg></button>
          <button class="on gap">A</button><button disabled>B</button><button disabled>Ext</button>
        </div>
        <label>水平：<input class="level" type="text" value="0" /><input class="unit" type="text" value="V" aria-label="单位" /></label>
        <div class="btns"><button>单次</button><button>正常</button><button>自动</button><button class="on">无</button></div>
      </fieldset>
    </div>
    <svg class="grip" width="10" height="10"><path d="M8 0h2M4 4h2M8 4h2M0 8h2M4 8h2M8 8h2" stroke="#aaa" stroke-width="2" /></svg>
  </div>

  <div class="watermark">CSDN @2301_77375791</div>
</div>

<style>
  :global(body) { margin: 0; background: #f0f0f0; }
  .app {
    position: relative; min-height: 100vh; display: flex; flex-direction: column; overflow: hidden;
    background: #f0f0f0; color: #000;
    font-family: Roboto, "Noto Sans CJK SC", sans-serif; font-size: 15px; line-height: 18px;
  }
  .app * { box-sizing: border-box; }
  button, input, select { font: inherit; color: inherit; margin: 0; padding: 0; }
  button { background: none; border: none; display: flex; align-items: center; justify-content: center; white-space: nowrap; }
  h1, h2, p, ul { margin: 0; padding: 0; font-size: 15px; font-weight: 400; }
  svg { display: block; flex: none; }
  .icon { overflow: visible; }
  .icon text { font-family: "Liberation Sans", sans-serif; font-weight: 700; }

  /* title bar and menu */
  .titlebar { display: flex; align-items: center; height: 30px; padding: 0 4px 1px 3px; background: #f3f3f3; border-bottom: 1px solid #a0a0a0; color: #999; }
  .titlebar h1 { margin-left: 7px; font-family: Roboto, "Noto Sans CJK SC", sans-serif; }
  .win-buttons { margin-left: auto; display: flex; }
  .win-buttons button { width: 58px; height: 28px; }
  .menubar { display: flex; align-items: center; height: 30px; padding: 0 3px 1px 4px; gap: 14px; border-top: 1px solid #fff; border-bottom: 1px solid #a0a0a0; }
  .menubar > .icon { width: 19px; height: 19px; margin-right: -7px; }
  .mdi { margin-left: auto; display: flex; gap: 1px; }
  .mdi button, .mini { width: 20px; height: 20px; background: #f0f0f0; border: 1px solid; border-color: #fff #696969 #696969 #fff; box-shadow: inset -1px -1px #a0a0a0; }

  /* toolbars */
  .toolrow { display: flex; height: 31px; }
  .toolbar { display: flex; align-items: center; padding: 0 3px 0 11px; border: 1px solid #a0a0a0; border-width: 0 1px 1px 0; box-shadow: inset 0 1px #fff; }
  .row0 .toolbar + .toolbar { margin-left: 47px; }
  .row0 .toolbar + .toolbar .sep { margin: 0 5px; }
  .row1 .toolbar:nth-child(2) { margin-left: 99px; width: 264px; }
  .tool { width: 22px; height: 24px; }
  .tool.pressed { background: #f8f8f8; border: 1px solid; border-color: #888 #fff #fff #888; }
  .sep { width: 1px; height: 24px; margin: 0 4px 0 3px; background: #a0a0a0; }
  .drop { width: 11px; height: 22px; }
  .drop::before { content: ""; border: 4px solid transparent; border-top-color: #000; margin-top: 4px; }
  .toolbar select {
    appearance: none; width: 134px; height: 24px; padding: 0 6px; border: 1px solid #d0d0d0; border-radius: 3px; font-size: 14px; color: #000;
    background: #fff url("data:image/svg+xml,%3Csvg xmlns='http://www.w3.org/2000/svg' width='10' height='6'%3E%3Cpath d='M1 1l4 4 4-4' fill='none' stroke='%23666'/%3E%3C/svg%3E") no-repeat right 5px center;
  }
  .sim { gap: 2px; margin-left: 2px; padding-bottom: 2px; font-size: 16px; }

  main { flex: 1; display: grid; grid-template-columns: 197px 1fr 27px; min-height: 0; }

  /* design toolbox */
  .dock { display: flex; flex-direction: column; padding: 4px 10px 4px 3px; border-right: 1px solid #888; border-bottom: 1px solid #a0a0a0; margin-bottom: 4px; }
  .dock-head { display: flex; align-items: center; gap: 3px; height: 25px; margin-bottom: 4px; }
  .dock-head h2 { flex: 1; padding: 0 3px 2px; line-height: 23px; background: linear-gradient(90deg, #bfcfdf, #d6e4f2); }
  .mini { width: 14px; height: 14px; font-size: 9px; line-height: 9px; font-weight: 700; }
  .up::before { content: ""; border: 3px solid transparent; border-bottom-color: #999; margin-top: -3px; }
  .right::before { content: ""; border: 3px solid transparent; border-left-color: #999; margin-right: -4px; }
  .dock-panel { flex: 1; display: flex; flex-direction: column; padding: 1px; border: 1px solid; border-color: #fff #696969 #696969 #ccc; box-shadow: inset -1px -1px #a0a0a0; }
  .dock-tools { display: flex; height: 24px; padding: 0 2px; gap: 4px; align-items: center; }
  .dock-tools .history { margin-left: auto; }
  .tree { flex: 1; list-style: none; padding: 1px 0 0 7px; background: #fff; border: 1px solid #828790; font-size: 14px; }
  .node { display: flex; align-items: center; height: 18px; }
  .node .icon { width: 14px; height: 14px; }
  .node i { width: 6px; margin-right: 1px; border-top: 1px dotted #888; }
  .node span { padding: 0 3px; margin-left: 3px; }
  .node.child { padding-left: 24px; }
  .node.child i { width: 10px; height: 10px; margin-top: -9px; border: 1px dotted #888; border-width: 0 0 1px 1px; }
  .node.child .icon { width: 15px; height: 15px; }
  .selected { background: #f0f0f0; }
  .fold { width: 11px; height: 11px; border: 1px solid #999; background: linear-gradient(#fff, #ddd); }
  .fold::before { content: ""; width: 7px; height: 1px; background: #3050a0; }
  .tabs { display: flex; gap: 2px; height: 24px; align-items: flex-start; }
  .tabs button { height: 22px; padding: 0 5px; background: #f0f0f0; border: 1px solid; border-color: #555 #696969 #696969 #fff; box-shadow: inset -1px -1px #a0a0a0; }
  .tabs .on { height: 24px; padding: 0 7px; border-top-color: transparent; }
  .dock-tabs button { padding: 0 4px; }

  /* schematic area */
  .work { display: flex; flex-direction: column; min-width: 0; border-top: 1px solid #696969; border-right: 1px solid #696969; }
  .frame { flex: 1; display: grid; grid-template-columns: minmax(0, 1fr) 22px; grid-template-rows: minmax(0, 1fr) 22px; margin: 3px 3px 6px 4px; border: 1px solid; border-width: 3px 1px 1px 3px; border-color: #808080 #e0e0e0 #e0e0e0 #808080; }
  .canvas { position: relative; background: #ababab; overflow: hidden; }
  .canvas > svg { position: absolute; inset: 0; font-family: "Liberation Sans", sans-serif; }
  .vscroll { padding: 20px 8px 309px; background: #f0f0f0; display: flex; }
  .vscroll i { width: 6px; background: #858585; }
  .hscroll { padding: 8px 22px 8px 244px; background: #f0f0f0; display: flex; }
  .hscroll i { flex: 1; background: #858585; }
  .ruler { font-size: 20px; fill: #808080; }
  .wire { fill: none; stroke: #f00; stroke-width: 2; }
  .navy { stroke: #000090; }
  .lead { fill: none; stroke: #000; stroke-width: 2; }
  .part { fill: #c0dcc0; stroke: #000; }
  .pin { fill: #9a9aa2; stroke: #000; }
  .pins { font-size: 12px; }
  .names { font: bold 23px "Liberation Mono", monospace; }
  .values { font-size: 23px; font-weight: 700; }
  .values text { white-space: pre; }
  .net { fill: #f00; }
  .reading { font: bold 19px "Noto Sans", sans-serif; fill: #0f0; }
  .amp { font: 17px "Liberation Mono", monospace; fill: #00d000; }
  .doc-tabs { display: flex; align-items: flex-start; height: 31px; padding: 0 2px 0 4px; border-top: 1px solid #696969; }
  .doc-tabs button { height: 25px; padding: 0 4px; gap: 4px; border: 1px solid #000; border-width: 0 2px 2px 1px; border-radius: 0 0 0 4px; }
  .doc-tabs .on { height: 27px; }
  .doc-tabs .icon { width: 19px; height: 19px; }
  .doc-tabs .raise { width: 15px; height: 15px; margin: 6px 0 0 auto; padding: 0; border: 1px solid; border-color: #fff #696969 #696969 #fff; border-radius: 0; }
  .doc-tabs .raise .icon { width: 12px; height: 12px; }

  .instruments { padding-right: 1px; border-bottom: 1px solid #a0a0a0; margin-bottom: 4px; }
  .inst-bar { padding: 13px 4px 3px 5px; border: 1px solid #a0a0a0; border-width: 0 1px 1px 0; }
  .inst-bar button { width: 16px; height: 21px; }
  .inst-bar hr { margin: 4px -3px 3px; border: 0; border-top: 1px solid #a0a0a0; }
  .inst-bar .more { height: 12px; font-size: 6px; }
  .inst-bar .off { color: #999; }

  /* spreadsheet view */
  .sheetview { display: flex; gap: 3px; padding: 1px 5px 1px 2px; border-top: 1px solid #555; }
  .side { display: flex; flex-direction: column; align-items: center; gap: 2px; width: 26px; }
  .side h2 {
    flex: 1; width: 26px; padding: 4px 0; transform: rotate(180deg); writing-mode: vertical-rl; text-orientation: sideways;
    line-height: 18px; background: linear-gradient(#c0cfdf, #d6e4f2);
  }
  .results { flex: 1; padding-top: 6px; }
  .log { display: flex; height: 140px; background: #fff; border: 1px solid #828790; box-shadow: 0 0 0 1px #fff, 1px 1px 0 2px #888; }
  .lines { flex: 1; padding: 1px 24px; font-family: "Noto Sans", "Noto Sans CJK SC", sans-serif; }
  .lines p { line-height: 24px; white-space: pre; }
  .lines .indent { padding-left: 16px; }
  .log-scroll { width: 22px; padding: 49px 11px 22px 5px; background: #f0f0f0; display: flex; }
  .log-scroll i { width: 6px; background: #858585; }
  .results .tabs { margin-top: 2px; }

  /* floating instrument windows */
  .window { position: absolute; background: #f0f0f0; border: 1px solid #b4b4b4; border-radius: 9px; box-shadow: 0 14px 32px rgba(0, 0, 0, .25); }
  .window-title { display: flex; align-items: center; justify-content: space-between; height: 37px; padding: 0 14px 1px 9px; background: #f3f3f3; color: #999; border-radius: 8px 8px 0 0; }
  .active .window-title { background: #eff3fb; color: #000; }
  .window button.on { background: #cce4f7; border-color: #005499; }
  .grip { position: absolute; right: 1px; bottom: 1px; }
  .ring { width: 16px; height: 16px; border: 5px solid #c0c0c0; border-radius: 50%; background: #fff; }

  .meter { width: 209px; height: 207px; font-size: 13px; }
  .meter .window-title { font-size: 15px; }
  .display { height: 40px; padding: 3px; border: 1px solid; border-color: #e0e0e0 #696969 #696969 #e0e0e0; }
  .display output { display: block; height: 32px; line-height: 22px; border: 1px solid #808080; background: #000; color: #fff; text-align: center; font-size: 15px; }
  .modes { display: flex; justify-content: center; gap: 11px; margin: 10px 7px 0; padding: 4px 0; border: 1px solid #dcdcdc; }
  .meter button { border: 1px solid #d0d0d0; border-radius: 4px; background: #fdfdfd; }
  .meter .window-title button { border: none; background: none; }
  .modes button { width: 33px; height: 24px; }
  .coupling { display: flex; justify-content: center; gap: 14px; width: 133px; margin: 0 0 0 37px; padding: 6px 0 5px; border: 1px solid #dcdcdc; border-top: none; }
  .coupling button { width: 49px; height: 19px; }
  .meter-foot { display: flex; justify-content: space-between; padding: 10px 6px 0 8px; }
  .meter-foot > button { width: 82px; height: 22px; margin-top: 4px; font-size: 15px; }
  .term { width: 18px; text-align: center; line-height: 16px; }
  .term .ring { display: block; margin-top: 1px; }
  .minus { margin-top: 2px; }

  .scope { width: 726px; font-size: 13px; box-shadow: 0 24px 56px rgba(0, 0, 0, .34); }
  .scope .window-title { font-size: 15px; padding-bottom: 4px; }
  .crt { padding: 1px; background: #000; border: 1px solid; border-color: #696969 #fff #fff #808080; }
  .rule { width: 38px; height: 11px; margin: 10px 20px 0 auto; border-top: 1px solid #999; }
  .readout { display: flex; height: 80px; }
  .cursors { display: grid; grid-template-columns: 21px 15px 15px; gap: 2px 4px; align-content: start; width: 69px; height: 73px; padding: 8px 0 0 5px; border: 1px solid #a0a0a0; border-left: none; }
  .scope button { border: 1px solid #d0d0d0; border-radius: 4px; background: #fdfdfd; }
  .scope .window-title button { border: none; background: none; }
  .cursors button { height: 19px; }
  .delta { grid-column: 1 / 4; }
  .values-box { width: 480px; height: 73px; background: #fff; border: 1px solid; border-color: #696969 #fff #fff #696969; }
  .values-box table { border-collapse: collapse; table-layout: fixed; width: 278px; }
  .values-box th, .values-box td { padding: 0; font-weight: 400; text-align: center; line-height: 16px; }
  .values-box th { padding-left: 9px; font-size: 14px; line-height: 18px; }
  .values-box th:first-child { width: 86px; }
  .values-box th:last-child { width: 86px; }
  .actions { flex: 1; display: flex; padding: 8px 18px 1px 9px; justify-content: space-between; }
  .pair { display: flex; flex-direction: column; gap: 8px; }
  .pair button { width: 70px; height: 26px; font-size: 14px; }
  .ext { display: flex; align-items: center; gap: 5px; align-self: flex-end; font-size: 15px; }
  .ext input { appearance: none; width: 16px; height: 16px; border: 1px solid #bbb; border-radius: 50%; background: #f6f6f6; }
  .groups { display: flex; padding-bottom: 1px; }
  fieldset { display: flex; flex-direction: column; gap: 3px; min-width: 0; margin: 0; padding: 0 3px 3px 2px; border: 1px solid #d8d8d8; border-left-width: 0; border-radius: 0; }
  .time { width: 182px; padding-right: 8px; }
  .cha { width: 176px; }
  .chb { width: 180px; padding-right: 4px; }
  .trig { width: 186px; padding: 0 4px 3px; border-right: none; }
  legend { margin-left: 4px; padding: 0 3px; font-size: 14px; line-height: 18px; }
  fieldset label, .line { display: flex; align-items: center; justify-content: space-between; height: 23px; font-size: 14px; white-space: nowrap; }
  fieldset input { width: 68px; height: 23px; padding: 0 4px; border: 1px solid #e8e8e8; border-bottom-color: #888; background: #fff; font-size: 13px; }
  fieldset .long { width: 112px; }
  .cha .long, .chb .long { width: 108px; }
  .btns { display: flex; align-items: center; gap: 3px; padding-top: 3px; }
  .btns button { min-width: 24px; height: 22px; padding: 0 6px; flex: none; font-size: 14px; }
  .cha .btns button { min-width: 27px; }
  .chb .btns { padding-left: 3px; }
  .time .btns { padding-left: 5px; }
  .time .btns button { padding: 0 5px; min-width: 37px; }
  .btns .ring { margin: 0 4px 0 auto; flex: none; }
  .line span { flex: 1; }
  .line button { height: 20px; padding: 0 4px; margin-left: 2px; min-width: 19px; font-size: 13px; }
  .line .gap { margin-left: 7px; }
  .line button:disabled { color: #999; background: #f5f5f5; border-color: #e4e4e4; }
  fieldset .level { width: 78px; margin-left: auto; }
  fieldset .unit { width: 38px; padding-left: 8px; margin-left: 1px; }
  .trig .btns button { flex: 1; }

  .watermark {
    position: absolute; right: 4px; bottom: 7px; font: 38px/48px "Liberation Sans", sans-serif;
    color: rgba(240, 240, 240, .85); text-shadow: 1px 1px 1px #999, -1px -1px 1px #ccc; pointer-events: none;
  }
</style>
